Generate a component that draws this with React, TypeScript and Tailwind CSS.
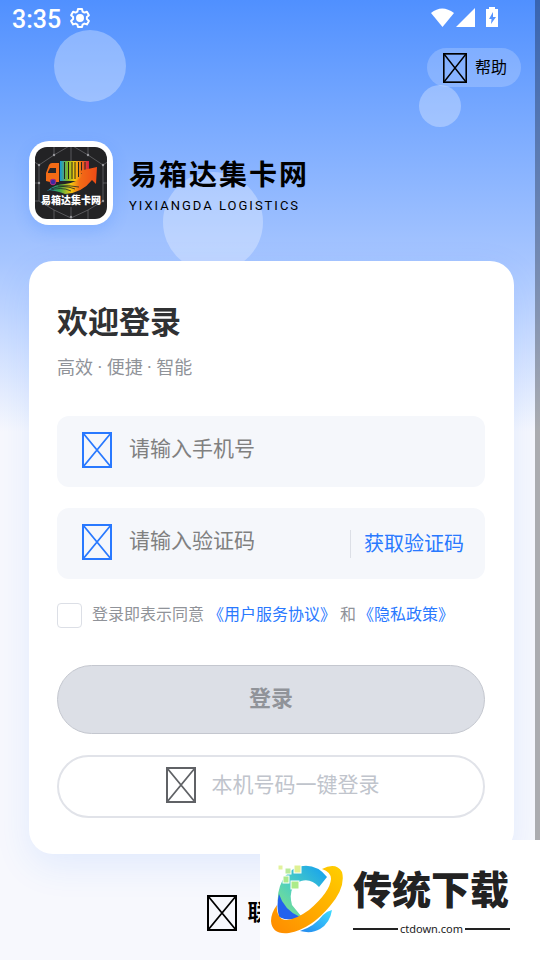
import React from "react";

const CJK = "font-['Roboto','Noto_Sans_CJK_SC',sans-serif]";

/** Placeholder glyph shown where the icon font has no character. */
function GlyphBox({ className }: { className: string }) {
  return (
    <svg viewBox="0 0 30 36" preserveAspectRatio="none" className={className} fill="none" stroke="currentColor" aria-hidden="true">
      <rect x="1" y="1" width="28" height="34" strokeWidth="2" />
      <path d="M1 1L29 35M29 1L1 35" strokeWidth="1.8" />
    </svg>
  );
}

function StatusBar() {
  return (
    <div className="flex h-9 items-center pl-3 pr-10 pt-1 text-white">
      <span className="text-[25px] font-medium leading-8">3:35</span>
      <svg viewBox="0 0 24 24" className="mb-1 ml-[7px] size-6" fill="none" stroke="currentColor" strokeWidth="2" strokeLinejoin="round" aria-hidden="true">
        <path d="M10 3h4l.6 2.6 1.8 1 2.500-.8 2 3.500-2 1.800v2l2 1.800-2 3.500-2.500-.8-1.800 1L14 21h-4l-.6-2.400-1.800-1-2.500.8-2-3.500 2-1.800v-2l-2-1.800 2-3.500 2.500.8 1.800-1z" />
        <circle cx="12" cy="12" r="3" fill="currentColor" />
      </svg>
      <svg viewBox="0 0 70 22" className="mb-1 ml-auto h-[22px] w-[70px]" fill="currentColor" aria-hidden="true">
        <path d="M1 6Q12-3 24 6L12.500 20Z" />
        <path d="M45 1V20H26Z" />
        <path fillRule="evenodd" d="M59 0h6v2h3v18H56V2h3zM63 5l-4 7h2.500l-.5 5 5-7h-3z" />
      </svg>
    </div>
  );
}

function TruckLogo() {
  return (
    <svg viewBox="0 0 72 72" className="size-[72px] rounded-xl bg-[#232325]" role="img" aria-label="易箱达集卡网">
      <defs>
        <linearGradient id="rainbow" x1="0" x2="1">
          <stop offset="0" stopColor="#1595d8" />
          <stop offset=".25" stopColor="#7cb82c" />
          <stop offset=".5" stopColor="#f7c90b" />
          <stop offset=".75" stopColor="#ef6b1b" />
          <stop offset="1" stopColor="#d51f47" />
        </linearGradient>
        <linearGradient id="trail" x1="0" x2="1">
          <stop offset="0" stopColor="#168fc9" />
          <stop offset=".25" stopColor="#39a94a" />
          <stop offset=".48" stopColor="#f2c810" />
          <stop offset=".65" stopColor="#f26d16" />
          <stop offset="1" stopColor="#ef4a16" />
        </linearGradient>
      </defs>
      <g fill="none" stroke="#707074" strokeWidth=".7">
        <path d="M19 8L36-2 53 8 68 18M19 8L4 18V36H0M19 8V0M36 0V14M53 8V0M4 54H0M4 36v18l15 9 17 8 17-8 15-9V18M68 36h4M19 63v9M53 63v9M36 60v12M4 18L-2 14M68 18l6-4" />
      </g>
      <g fill="#98989c">
        <circle cx="19" cy="8" r="1.200" />
        <circle cx="53" cy="8" r="1.200" />
        <circle cx="4" cy="18" r="1.200" />
        <circle cx="68" cy="18" r="1.200" />
        <circle cx="4" cy="36" r="1.200" />
        <circle cx="68" cy="54" r="1.200" />
        <circle cx="36" cy="70" r="1.200" />
      </g>
      <rect x="25" y="14" width="29" height="20" fill="url(#rainbow)" />
      <path d="M29.500 15v17M33.500 15v17M37 15v17M40 15v17M43.500 15v15M46.500 15v12M50 15v8" stroke="#28221c" strokeWidth="1" />
      <path d="M11 34V26l3-8q1-2 3-2h7v19h-3a3 3 0 00-6 0z" fill="#f36b16" />
      <path d="M13 25l2-4h6v5h-8z" fill="#26262a" />
      <circle cx="18" cy="35" r="2.800" fill="#3b2aa0" stroke="#b02b8a" />
      <path d="M12 44Q20 37 30 37Q42 36 48 28L44 24L62 20L61 37L57 33Q47 46 30 47Q18 42 12 44Z" fill="url(#trail)" />
      <path d="M13 44Q26 39 36 44M16 42Q28 37 40 42M23 39Q34 38 44 40" stroke="#232325" strokeWidth=".8" fill="none" />
      <text x="36" y="57" textAnchor="middle" fontSize="10" fontWeight="900" fill="#fff">易箱达集卡网</text>
    </svg>
  );
}

function DownloadBadge() {
  return (
    <aside className="absolute bottom-0 right-0 flex h-[120px] w-[280px] items-center bg-white pl-[9px]">
      <svg viewBox="0 0 76 72" className="mb-0.5 h-[72px] w-[76px] shrink-0" aria-hidden="true">
        <defs>
          <linearGradient id="cBlue" x1="1" y1="0" x2="0" y2="1">
            <stop offset="0" stopColor="#119df4" />
            <stop offset=".55" stopColor="#4ccfc0" />
            <stop offset="1" stopColor="#8be47f" />
          </linearGradient>
          <linearGradient id="cRing" x1="1" y1="0" x2="0" y2="1">
            <stop offset="0" stopColor="#ffcf00" />
            <stop offset="1" stopColor="#ff8a00" />
          </linearGradient>
          <linearGradient id="cTail" x1="0" y1="1" x2="1" y2="0">
            <stop offset="0" stopColor="#2387ee" />
            <stop offset="1" stopColor="#3fdcff" />
          </linearGradient>
        </defs>
        <path d="M26 5Q45-2 58 14L50 24Q42 15 32 18Q18 24 23 42L32 53Q23 58 12 54Q6 38 11 23Q15 11 26 5Z" fill="url(#cBlue)" />
        <path d="M10 31Q15 47 31 54Q21 59 10 54Q7 43 10 31Z" fill="#2462ed" />
        <path d="M53 6Q67-1 73 9Q77 24 61 43Q42 66 20 70Q3 72 2 58Q2 50 8 42Q7 52 13 56Q22 60 40 47Q61 29 62 16Q62 9 53 6Z" fill="url(#cRing)" />
        <path d="M31 68Q46 63 54 52Q58 48 63 47Q61 60 51 66Q43 71 31 68Z" fill="url(#cTail)" />
        <g stroke="#fff" strokeWidth="1">
          <rect x="9" y="2" width="5" height="5" fill="#e2f29c" />
          <rect x="16" y="5" width="6" height="6" fill="#b8eb9a" />
          <rect x="25" y="2" width="7" height="8" fill="#def093" />
          <rect x="14" y="13" width="6" height="7" fill="#aae98d" />
          <rect x="22" y="18" width="8" height="8" fill="#aceb89" />
        </g>
      </svg>
      <div className="ml-2 w-[157px] text-[#222]">
        <p className="whitespace-nowrap text-[39px] font-black leading-[56px]">传统下载</p>
        <p className="mt-0.5 flex items-center gap-0.5 font-['Noto_Sans',sans-serif] text-[11px] leading-4 before:h-0.5 before:flex-1 before:bg-current after:h-0.5 after:flex-1 after:bg-current">
          ctdown.com
        </p>
      </div>
    </aside>
  );
}

export default function App() {
  return (
    <main className={`relative flex min-h-screen flex-col overflow-hidden bg-[#f7f8fd] ${CJK}`}>
      <div className="absolute inset-x-0 top-0 h-[432px] bg-linear-to-b from-[#5090ff] via-[#a6c5ff] via-60% to-[#f7f8fd]" />
      <div className="absolute left-[54px] top-[30px] size-[72px] rounded-full bg-white/30" />
      <div className="absolute right-[79px] top-[85px] size-[42px] rounded-full bg-white/30" />
      <div className="absolute left-[163px] top-[172px] size-[100px] rounded-full bg-white/30" />

      <div className="relative">
        <StatusBar />
        <div className="mt-3 flex justify-end pr-[19px]">
          <button type="button" className="flex h-[39px] items-center gap-2 rounded-full bg-white/20 pl-4 pr-[14px] text-[16px] text-black">
            <GlyphBox className="h-[30px] w-6" />
            帮助
          </button>
        </div>

        <header className="mt-[54px] flex items-center gap-4 pl-[29px]">
          <div className="rounded-[20px] bg-white p-1.5 shadow-[0_6px_16px_rgba(41,121,255,0.2)]">
            <TruckLogo />
          </div>
          <div className="pt-1.5">
            <h1 className="text-[28px] font-bold leading-10 tracking-[2px]">易箱达集卡网</h1>
            <p className="text-[13px] leading-5 tracking-[2px]">YIXIANGDA LOGISTICS</p>
          </div>
        </header>

        <form
          className="ml-[29px] mr-[26px] mt-9 flex flex-col rounded-3xl bg-white pb-9 pl-7 pr-[29px] pt-[39px] shadow-[0_12px_36px_rgba(41,121,255,0.1)]"
          onSubmit={(e: React.FormEvent) => e.preventDefault()}
        >
          <h2 className="text-[31px] font-bold leading-[46px] text-[#303133]">欢迎登录</h2>
          <p className="mt-2 text-[18px] leading-7 text-[#909399]">高效 · 便捷 · 智能</p>

          <label className="mt-[34px] flex h-[71px] items-center rounded-xl bg-[#f5f7fb] pl-[25px] pr-5 text-[#2979ff]">
            <GlyphBox className="mb-1 h-9 w-[30px] shrink-0" />
            <input
              type="tel"
              aria-label="手机号"
              placeholder="请输入手机号"
              className="ml-[17px] h-10 min-w-0 flex-1 bg-transparent pb-1.5 text-[21px] text-[#303133] outline-none placeholder:text-[#808080]"
            />
          </label>

          <div className="mt-[21px] flex h-[71px] items-center rounded-xl bg-[#f5f7fb] pl-[25px] pr-[21px] text-[#2979ff]">
            <GlyphBox className="mb-1 h-9 w-[30px] shrink-0" />
            <input
              type="text"
              aria-label="验证码"
              placeholder="请输入验证码"
              className="ml-[17px] h-10 min-w-0 flex-1 bg-transparent pb-1.5 text-[21px] text-[#303133] outline-none placeholder:text-[#808080]"
            />
            <button type="button" className="flex shrink-0 items-center gap-[13px] text-[20px] before:h-7 before:w-px before:bg-[#dcdfe6]">
              获取验证码
            </button>
          </div>

          <div className="mt-6 flex h-[25px] items-center gap-[10px] whitespace-nowrap text-[16px] leading-6 text-[#909399]">
            <input id="agree" type="checkbox" className="size-[25px] shrink-0 appearance-none rounded border border-[#dcdfe6] bg-white" />
            <label htmlFor="agree" className="pb-0.5">
              登录即表示同意
              <a href="#terms" className="mx-1 text-[#2979ff]">《用户服务协议》</a>
              和
              <a href="#privacy" className="ml-0.5 text-[#2979ff]">《隐私政策》</a>
            </label>
          </div>

          <button
            type="submit"
            disabled
            className="mt-[37px] h-[69px] rounded-full border border-[#c4c7cf] bg-[#dcdfe6] pb-[3px] text-[22px] font-bold text-[#909399]"
          >
            登录
          </button>
          <button
            type="button"
            disabled
            className="mt-[21px] flex h-[63px] items-center justify-center gap-4 rounded-full border-2 border-[#e1e3e9] pl-[3px] text-[21px] text-[#c0c4cc]"
          >
            <GlyphBox className="mb-1 h-9 w-[30px] text-[#606266]" />
            <span className="pb-0.5">本机号码一键登录</span>
          </button>
        </form>

        <footer className="mt-[41px] flex justify-center pl-[3px]">
          <button type="button" className="flex items-center gap-[10px] text-[22px] font-bold leading-9 text-black">
            <GlyphBox className="h-9 w-[30px]" />
            联系客服
          </button>
        </footer>
      </div>

      <div className="absolute inset-y-0 right-0 w-[5px] bg-black/30" />
      <DownloadBadge />
    </main>
  );
}
